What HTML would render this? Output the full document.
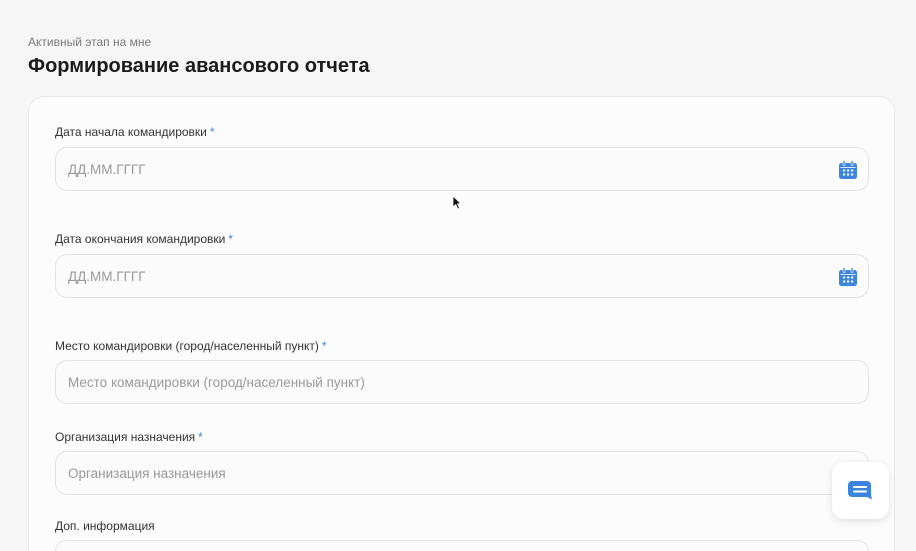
<!DOCTYPE html>
<html><head><meta charset="utf-8"><style>
*{box-sizing:border-box;margin:0;padding:0}
html,body{width:916px;height:551px;overflow:hidden;background:#f6f6f6;font-family:"Liberation Sans",sans-serif;position:relative}
.sub{position:absolute;left:28px;top:35px;font-size:12px;color:#7a7a7a}
.h{position:absolute;left:28px;top:55px;font-size:20px;font-weight:bold;color:#1b1b1b}
.card{position:absolute;left:28px;top:96px;width:867px;height:455px;background:#fcfcfc;border:1px solid #e8e8e8;border-bottom:none;border-radius:16px 16px 0 0}
.lbl{position:absolute;left:55px;font-size:12px;color:#333}
.lbl b{color:#3d84e0;font-weight:normal;margin-left:3px}
.inp{position:absolute;left:55px;width:814px;height:44px;border:1px solid #e4e4e4;border-radius:12px;background:#fbfbfb;font-size:13.5px;color:#999;padding:14px 0 0 12px}
.cal{position:absolute;right:10px;top:12px}
.chat{position:absolute;left:832px;top:462px;width:57px;height:57px;background:#fff;border-radius:12px;box-shadow:0 2px 8px rgba(0,0,0,.12)}
</style></head><body>
<div class="sub">Активный этап на мне</div>
<div class="h">Формирование авансового отчета</div>
<div class="card"></div>
<div class="lbl" style="top:125px">Дата начала командировки<b>*</b></div>
<div class="inp" style="top:147px">ДД.ММ.ГГГГ<svg class="cal" width="20" height="20" viewBox="0 0 20 20"><rect x="1" y="3" width="18" height="16" rx="2.5" fill="#3d84e0"/><rect x="5" y="0.5" width="2" height="5" rx="1" fill="#3d84e0" stroke="#fff" stroke-width=".6"/><rect x="13" y="0.5" width="2" height="5" rx="1" fill="#3d84e0" stroke="#fff" stroke-width=".6"/><rect x="2.5" y="7" width="15" height="0.8" fill="#fff"/><g fill="#fff"><rect x="5" y="9.5" width="2.2" height="2"/><rect x="9" y="9.5" width="2.2" height="2"/><rect x="13" y="9.5" width="2.2" height="2"/><rect x="5" y="13.5" width="2.2" height="2"/><rect x="9" y="13.5" width="2.2" height="2"/><rect x="13" y="13.5" width="2.2" height="2"/></g></svg></div>
<div class="lbl" style="top:232px">Дата окончания командировки<b>*</b></div>
<div class="inp" style="top:254px">ДД.ММ.ГГГГ<svg class="cal" width="20" height="20" viewBox="0 0 20 20"><rect x="1" y="3" width="18" height="16" rx="2.5" fill="#3d84e0"/><rect x="5" y="0.5" width="2" height="5" rx="1" fill="#3d84e0" stroke="#fff" stroke-width=".6"/><rect x="13" y="0.5" width="2" height="5" rx="1" fill="#3d84e0" stroke="#fff" stroke-width=".6"/><rect x="2.5" y="7" width="15" height="0.8" fill="#fff"/><g fill="#fff"><rect x="5" y="9.5" width="2.2" height="2"/><rect x="9" y="9.5" width="2.2" height="2"/><rect x="13" y="9.5" width="2.2" height="2"/><rect x="5" y="13.5" width="2.2" height="2"/><rect x="9" y="13.5" width="2.2" height="2"/><rect x="13" y="13.5" width="2.2" height="2"/></g></svg></div>
<div class="lbl" style="top:339px">Место командировки (город/населенный пункт)<b>*</b></div>
<div class="inp" style="top:360px">Место командировки (город/населенный пункт)</div>
<div class="lbl" style="top:430px">Организация назначения<b>*</b></div>
<div class="inp" style="top:451px">Организация назначения</div>
<div class="lbl" style="top:519px">Доп. информация</div>
<div class="inp" style="top:540px;height:11px;border-bottom:none;border-radius:12px 12px 0 0;padding:0"></div>
<div class="chat"><svg style="position:absolute;left:16px;top:19px" width="25" height="20" viewBox="0 0 25 20"><path d="M4 0H19A4 4 0 0 1 23 4V14L24 18.5L19 16H4A4 4 0 0 1 0 12V4A4 4 0 0 1 4 0Z" fill="#3d84e0"/><rect x="5" y="5" width="14" height="2" rx="1" fill="#fff"/><rect x="5" y="9.5" width="14" height="2" rx="1" fill="#fff"/></svg></div>
<svg style="position:absolute;left:452px;top:195px" width="10" height="15" viewBox="0 0 10 15"><path d="M1 1V12L3.8 9.5L5.8 14L7.5 13.2L5.6 8.8H9Z" fill="#111" stroke="#fff" stroke-width=".8"/></svg>
</body></html>
